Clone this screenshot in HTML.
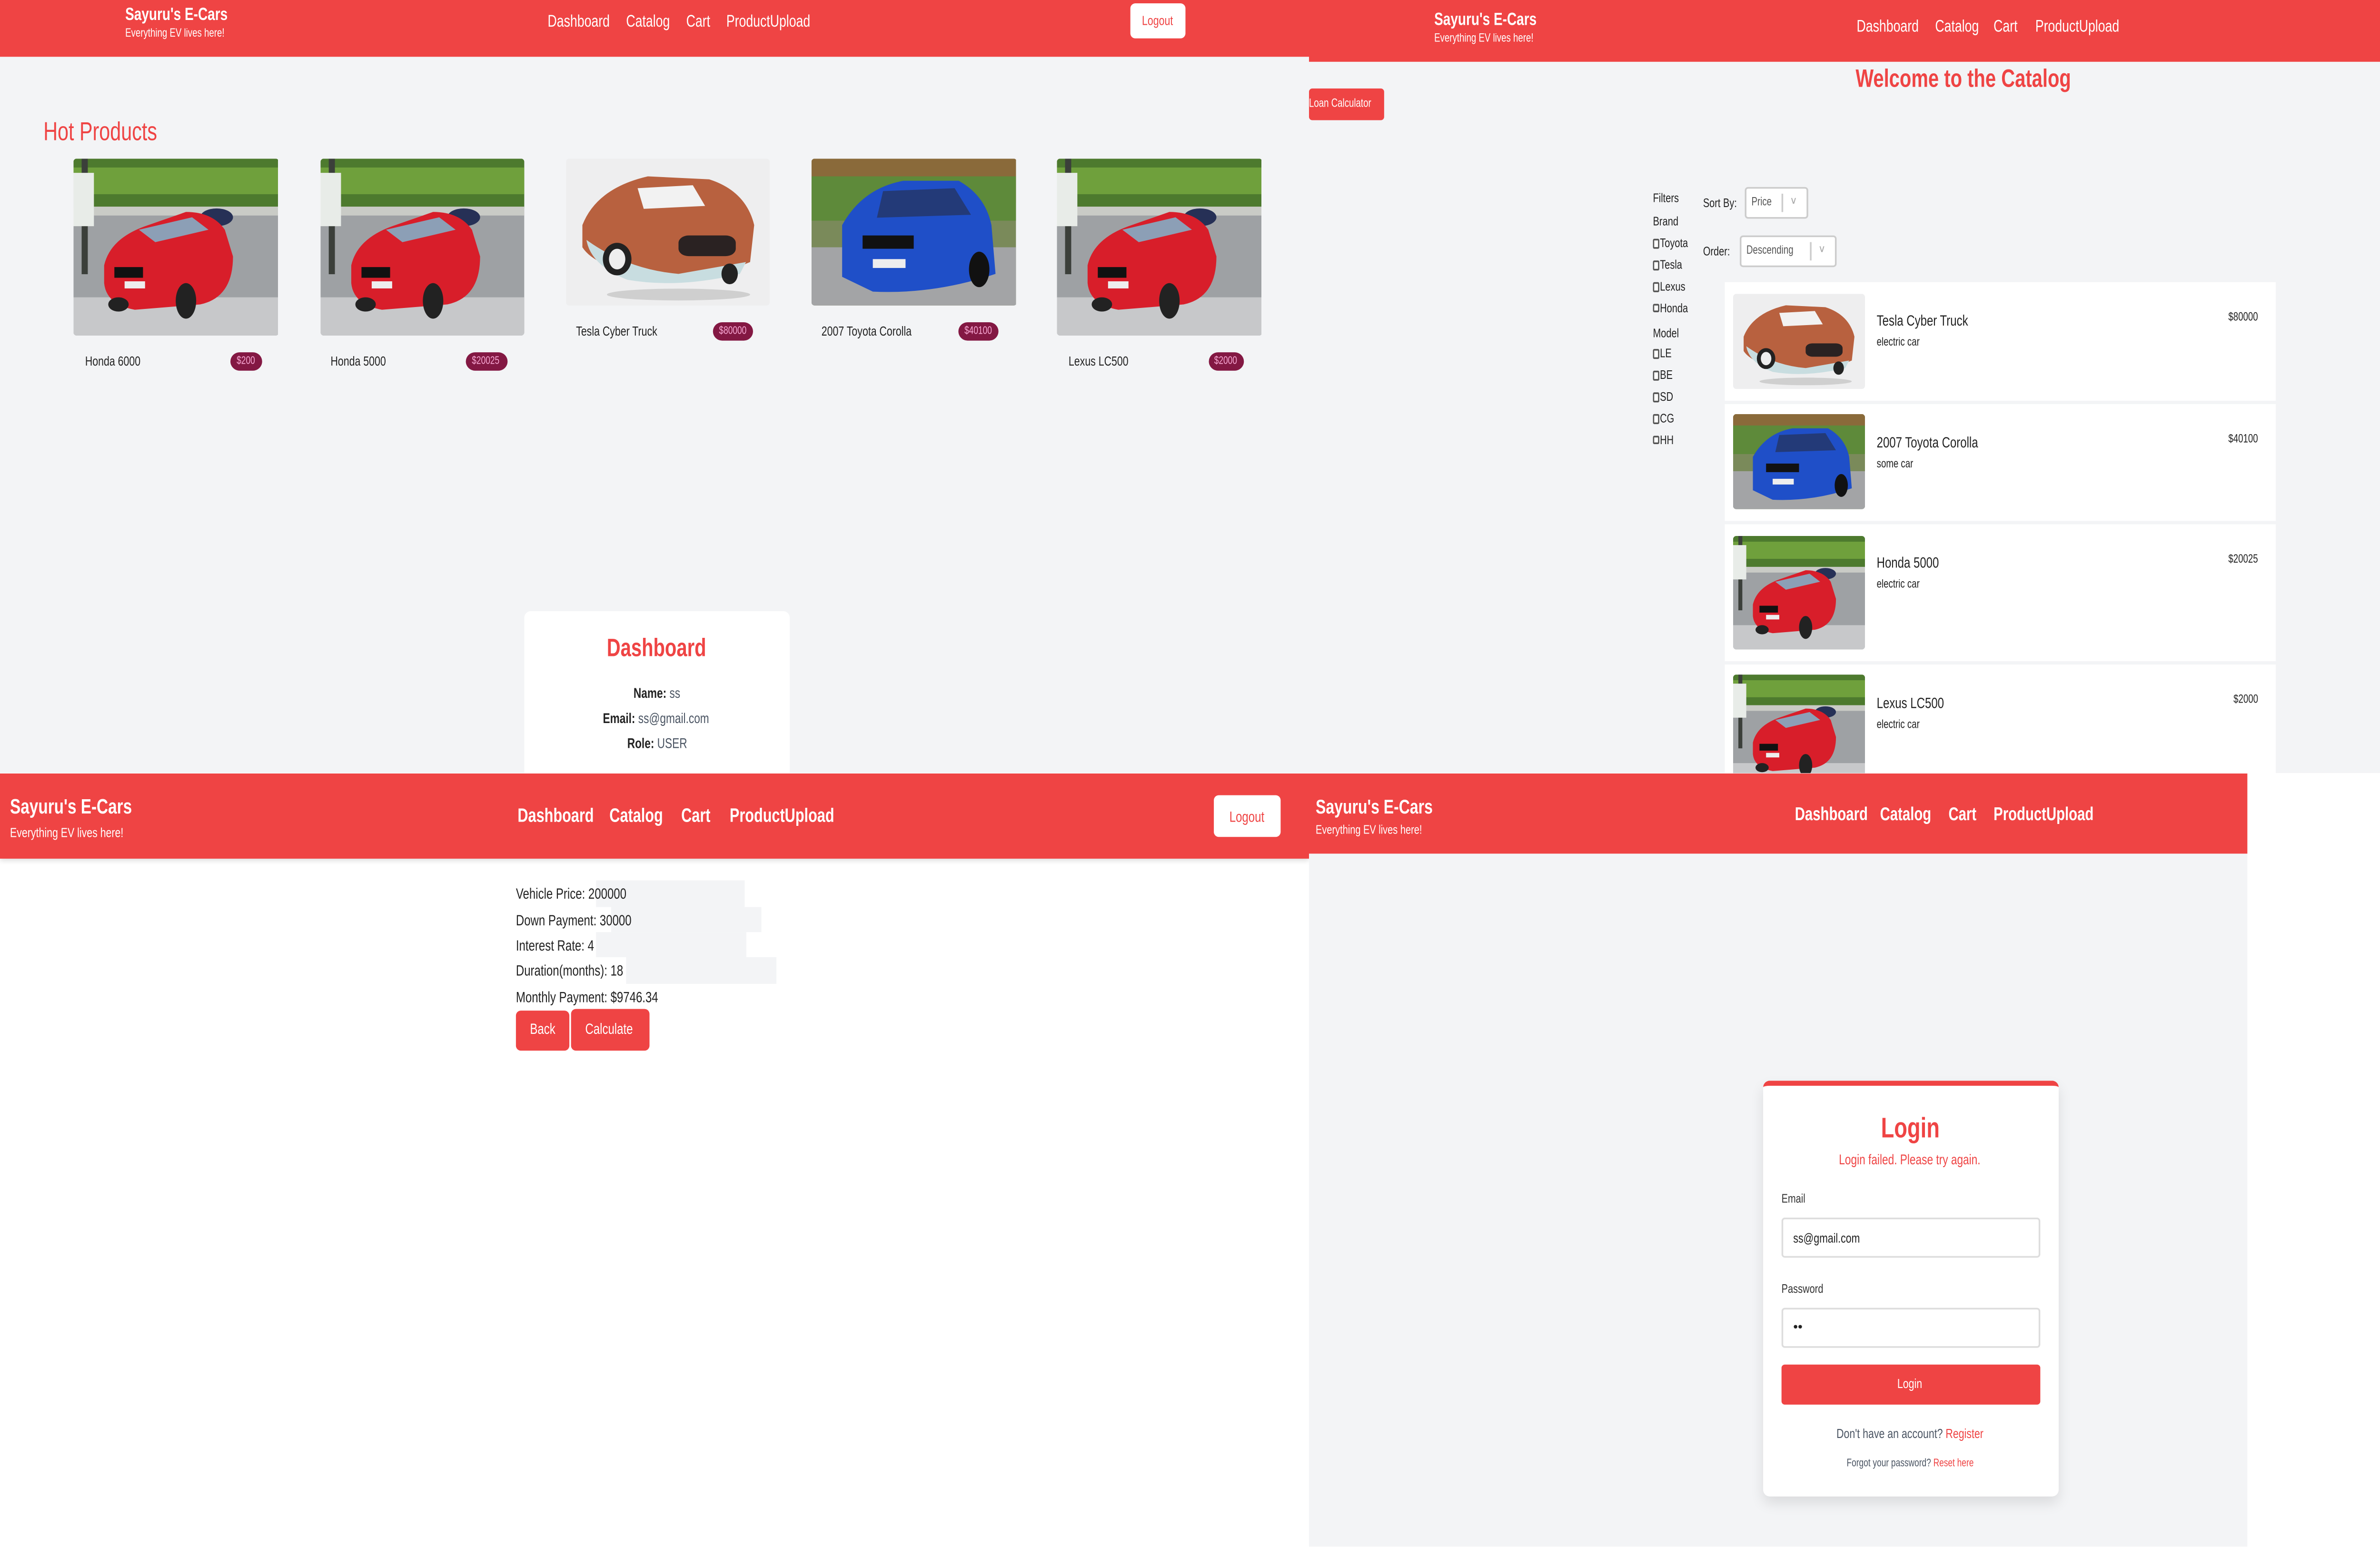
<!DOCTYPE html>
<html><head><meta charset="utf-8">
<style>
*{margin:0;padding:0;box-sizing:border-box}
html,body{width:5500px;height:3250px;overflow:hidden;background:#fff;font-family:"Liberation Sans",sans-serif}
.q{position:absolute;width:784px;height:463.3px;transform:scale(3.5077);transform-origin:0 0;overflow:hidden;background:#f3f4f6}
.a{position:absolute;white-space:nowrap}
.n{display:inline-block;transform:scaleX(.76);transform-origin:0 50%}
.c .n{transform-origin:50% 50%}
.r .n{transform-origin:100% 50%}
.nav{position:absolute;left:0;top:0;width:100%;background:#ef4444}
.w{color:#fff}
.red{color:#ef4444}
.btnw{position:absolute;background:#fff;border-radius:3px;color:#ef4444;font-size:8px;display:flex;align-items:center;justify-content:center}
.img{position:absolute;border-radius:2px;overflow:hidden}
.img svg{width:100%;height:100%;display:block}
.badge{position:absolute;background:#831843;color:#f9a8d4;border-radius:6px;font-size:6.5px;display:flex;align-items:center;justify-content:center}
.t8{font-size:8px;line-height:8px;color:#222}
.cb{display:inline-block;width:5px;height:5.5px;border:0.6px solid #555;border-radius:1px;margin-right:0.5px;vertical-align:-0.5px;background:#fff}
</style></head><body>
<svg width="0" height="0" style="position:absolute">
<defs>
<symbol id="redcar" viewBox="0 0 100 100" preserveAspectRatio="none">
<rect width="100" height="100" fill="#9ea1a4"/>
<rect width="100" height="28" fill="#4d7a2e"/>
<rect x="0" y="5" width="100" height="15" fill="#6fa03c"/>
<rect x="0" y="27" width="100" height="5" fill="#c9cbc6"/>
<rect x="0" y="78" width="100" height="22" fill="#c7c8ca"/>
<rect x="4" y="0" width="3" height="65" fill="#3b3f3a"/>
<rect x="0" y="8" width="10" height="30" fill="#e8ece8"/>
<ellipse cx="70" cy="33" rx="8" ry="5" fill="#263056"/>
<path d="M15 60 Q18 45 35 38 L55 30 Q68 30 74 40 L78 55 Q78 78 62 82 L30 85 Q16 82 15 70Z" fill="#d81e2a"/>
<path d="M32 40 L58 33 L66 40 L40 47Z" fill="#8c9fb6"/>
<rect x="20" y="61" width="14" height="6" fill="#111"/>
<rect x="25" y="69" width="10" height="4" fill="#eee"/>
<ellipse cx="55" cy="80" rx="5" ry="10" fill="#222"/>
<ellipse cx="22" cy="82" rx="5" ry="4" fill="#222"/>
</symbol>
<symbol id="oldcar" viewBox="0 0 100 100" preserveAspectRatio="none">
<rect width="100" height="100" fill="#eeeeef"/>
<path d="M8 45 Q15 20 40 12 L70 14 Q88 22 92 45 L90 70 Q70 82 45 80 Q15 75 8 60Z" fill="#b8613f"/>
<path d="M10 55 Q30 75 55 78 L88 70 L85 78 Q55 88 30 82 Q12 72 10 55Z" fill="#c8dde0"/>
<path d="M35 20 L62 18 L68 32 L38 34Z" fill="#f2f2f2"/>
<rect x="55" y="52" width="28" height="14" rx="5" fill="#2a2222"/>
<ellipse cx="25" cy="68" rx="7" ry="11" fill="#222"/>
<ellipse cx="25" cy="68" rx="4" ry="7" fill="#eee"/>
<ellipse cx="80" cy="78" rx="4" ry="7" fill="#222"/>
<ellipse cx="55" cy="92" rx="35" ry="4" fill="#cfcfcf"/>
</symbol>
<symbol id="bluecar" viewBox="0 0 100 100" preserveAspectRatio="none">
<rect width="100" height="100" fill="#7a8a5a"/>
<rect width="100" height="30" fill="#8a6a3a"/>
<rect x="0" y="12" width="100" height="30" fill="#5e8a3a"/>
<rect x="0" y="60" width="100" height="40" fill="#a3a4a6"/>
<path d="M15 45 Q25 20 45 15 L72 15 Q85 25 88 45 L90 78 Q60 92 30 90 L15 80Z" fill="#1f4fc8"/>
<path d="M35 22 L70 20 L78 38 L32 40Z" fill="#233a78"/>
<rect x="25" y="52" width="25" height="9" fill="#111"/>
<rect x="30" y="68" width="16" height="6" fill="#eee"/>
<ellipse cx="82" cy="75" rx="5" ry="12" fill="#111"/>
</symbol>
</defs>
</svg>

<!-- Q1 Home / Hot products -->
<div class="q" style="left:0;top:0">
 <div class="nav" style="height:34px"></div>
 <div class="a w" style="left:75px;top:3px;font-size:10.5px;font-weight:bold"><span class="n">Sayuru's E-Cars</span></div>
 <div class="a w" style="left:75px;top:17px;font-size:7px"><span class="n">Everything EV lives here!</span></div>
 <div class="a w" style="left:328px;top:8px;font-size:10px"><span class="n">Dashboard</span></div>
 <div class="a w" style="left:375px;top:8px;font-size:10px"><span class="n">Catalog</span></div>
 <div class="a w" style="left:410.5px;top:8px;font-size:10px"><span class="n">Cart</span></div>
 <div class="a w" style="left:435px;top:8px;font-size:10px"><span class="n">ProductUpload</span></div>
 <div class="btnw" style="left:676.5px;top:2.4px;width:33.5px;height:20.6px"><span class="n" style="transform-origin:50% 50%">Logout</span></div>
 <div class="a red" style="left:26px;top:71px;font-size:15.5px"><span class="n">Hot Products</span></div>

 <div class="img" style="left:44px;top:94.5px;width:122.5px;height:106.5px"><svg><use href="#redcar"/></svg></div>
 <div class="img" style="left:191.5px;top:94.5px;width:122.5px;height:106.5px"><svg><use href="#redcar"/></svg></div>
 <div class="img" style="left:338.5px;top:94.5px;width:122.5px;height:88.5px"><svg><use href="#oldcar"/></svg></div>
 <div class="img" style="left:486px;top:94.5px;width:122.5px;height:88.5px"><svg><use href="#bluecar"/></svg></div>
 <div class="img" style="left:633px;top:94.5px;width:122.5px;height:106.5px"><svg><use href="#redcar"/></svg></div>

 <div class="a t8" style="left:50.5px;top:212.5px"><span class="n">Honda 6000</span></div>
 <div class="badge" style="left:137.5px;top:210.5px;width:19px;height:11px"><span class="n" style="transform-origin:50% 50%">$200</span></div>
 <div class="a t8" style="left:197.5px;top:212.5px"><span class="n">Honda 5000</span></div>
 <div class="badge" style="left:279px;top:210.5px;width:24.5px;height:11px"><span class="n" style="transform-origin:50% 50%">$20025</span></div>
 <div class="a t8" style="left:345px;top:195px"><span class="n">Tesla Cyber Truck</span></div>
 <div class="badge" style="left:426.5px;top:193px;width:24px;height:11px"><span class="n" style="transform-origin:50% 50%">$80000</span></div>
 <div class="a t8" style="left:492px;top:195px"><span class="n">2007 Toyota Corolla</span></div>
 <div class="badge" style="left:574px;top:193px;width:24px;height:11px"><span class="n" style="transform-origin:50% 50%">$40100</span></div>
 <div class="a t8" style="left:639.5px;top:212.5px"><span class="n">Lexus LC500</span></div>
 <div class="badge" style="left:723.5px;top:210.5px;width:21.5px;height:11px"><span class="n" style="transform-origin:50% 50%">$2000</span></div>

 <div class="a" style="left:314px;top:366px;width:158.5px;height:100px;background:#fff;border-radius:4px"></div>
 <div class="a c red" style="left:314px;top:380px;width:158.5px;text-align:center;font-size:15px;font-weight:bold"><span class="n">Dashboard</span></div>
 <div class="a c" style="left:314px;top:409.5px;width:158.5px;text-align:center;font-size:8.5px;color:#4b5563"><span class="n"><b style="color:#222">Name:</b> ss</span></div>
 <div class="a c" style="left:314px;top:424.5px;width:158.5px;text-align:center;font-size:8.5px;color:#4b5563"><span class="n"><b style="color:#222">Email:</b> ss@gmail.com</span></div>
 <div class="a c" style="left:314px;top:439.5px;width:158.5px;text-align:center;font-size:8.5px;color:#4b5563"><span class="n"><b style="color:#222">Role:</b> USER</span></div>
</div>

<!-- Q2 Catalog -->
<div class="q" style="left:2750px;top:0">
 <div class="nav" style="height:36.6px"></div>
 <div class="a w" style="left:75px;top:5.5px;font-size:10.5px;font-weight:bold"><span class="n">Sayuru's E-Cars</span></div>
 <div class="a w" style="left:75px;top:19.5px;font-size:7px"><span class="n">Everything EV lives here!</span></div>
 <div class="a w" style="left:328px;top:10.5px;font-size:10px"><span class="n">Dashboard</span></div>
 <div class="a w" style="left:374.5px;top:10.5px;font-size:10px"><span class="n">Catalog</span></div>
 <div class="a w" style="left:410px;top:10.5px;font-size:10px"><span class="n">Cart</span></div>
 <div class="a w" style="left:434.5px;top:10.5px;font-size:10px"><span class="n">ProductUpload</span></div>
 <div class="btnw" style="left:676px;top:4.7px;width:33.5px;height:21.3px"><span class="n" style="transform-origin:50% 50%">Logout</span></div>
 <div class="a c red" style="left:292px;top:39px;width:200px;text-align:center;font-size:15px;font-weight:bold"><span class="n">Welcome to the Catalog</span></div>
 <div class="a" style="left:0;top:52.6px;width:45px;height:19.4px;background:#ef4444;border-radius:2px;color:#fff;font-size:7px;line-height:19.4px;overflow:hidden"><span class="n">Loan Calculator</span></div>

 <div class="a t8" style="left:205.5px;top:114.5px;font-size:7.5px"><span class="n">Filters</span></div>
 <div class="a t8" style="left:205.5px;top:129px;font-size:7.5px"><span class="n">Brand</span></div>
 <div class="a t8" style="left:205.5px;top:142px;font-size:7.5px"><span class="n"><i class="cb"></i>Toyota</span></div>
 <div class="a t8" style="left:205.5px;top:155px;font-size:7.5px"><span class="n"><i class="cb"></i>Tesla</span></div>
 <div class="a t8" style="left:205.5px;top:168px;font-size:7.5px"><span class="n"><i class="cb"></i>Lexus</span></div>
 <div class="a t8" style="left:205.5px;top:180.5px;font-size:7.5px"><span class="n"><i class="cb"></i>Honda</span></div>
 <div class="a t8" style="left:205.5px;top:196px;font-size:7.5px"><span class="n">Model</span></div>
 <div class="a t8" style="left:205.5px;top:208px;font-size:7.5px"><span class="n"><i class="cb"></i>LE</span></div>
 <div class="a t8" style="left:205.5px;top:221px;font-size:7.5px"><span class="n"><i class="cb"></i>BE</span></div>
 <div class="a t8" style="left:205.5px;top:234px;font-size:7.5px"><span class="n"><i class="cb"></i>SD</span></div>
 <div class="a t8" style="left:205.5px;top:247px;font-size:7.5px"><span class="n"><i class="cb"></i>CG</span></div>
 <div class="a t8" style="left:205.5px;top:259.5px;font-size:7.5px"><span class="n"><i class="cb"></i>HH</span></div>

 <div class="a t8" style="left:235.5px;top:118px;font-size:7.5px"><span class="n">Sort By:</span></div>
 <div class="a" style="left:261px;top:111.7px;width:38px;height:19.8px;background:#fff;border:0.6px solid #ccc;border-radius:2px"></div>
 <div class="a" style="left:265px;top:118px;font-size:7px;color:#555"><span class="n">Price</span></div>
 <div class="a" style="left:283px;top:116px;width:0.6px;height:11px;background:#ccc"></div>
 <div class="a" style="left:288px;top:117px;font-size:6px;color:#aaa">∨</div>
 <div class="a t8" style="left:235.5px;top:147px;font-size:7.5px"><span class="n">Order:</span></div>
 <div class="a" style="left:257.5px;top:141px;width:58px;height:19.4px;background:#fff;border:0.6px solid #ccc;border-radius:2px"></div>
 <div class="a" style="left:262px;top:147px;font-size:7px;color:#555"><span class="n">Descending</span></div>
 <div class="a" style="left:300px;top:145px;width:0.6px;height:11px;background:#ccc"></div>
 <div class="a" style="left:305px;top:146px;font-size:6px;color:#aaa">∨</div>

 <div class="a" style="left:249px;top:169px;width:330px;height:71px;background:#fff"></div>
 <div class="img" style="left:254px;top:176px;width:79px;height:57px"><svg><use href="#oldcar"/></svg></div>
 <div class="a t8" style="left:340px;top:187.5px;font-size:9px"><span class="n">Tesla Cyber Truck</span></div>
 <div class="a t8" style="left:340px;top:202px;font-size:7px"><span class="n">electric car</span></div>
 <div class="a t8 r" style="left:468px;width:100px;text-align:right;top:187px;font-size:7px"><span class="n">$80000</span></div>

 <div class="a" style="left:249px;top:242px;width:330px;height:70px;background:#fff"></div>
 <div class="img" style="left:254px;top:248px;width:79px;height:57px"><svg><use href="#bluecar"/></svg></div>
 <div class="a t8" style="left:340px;top:260.5px;font-size:9px"><span class="n">2007 Toyota Corolla</span></div>
 <div class="a t8" style="left:340px;top:275px;font-size:7px"><span class="n">some car</span></div>
 <div class="a t8 r" style="left:468px;width:100px;text-align:right;top:260px;font-size:7px"><span class="n">$40100</span></div>

 <div class="a" style="left:249px;top:314px;width:330px;height:82px;background:#fff"></div>
 <div class="img" style="left:254px;top:320.5px;width:79px;height:68.5px"><svg><use href="#redcar"/></svg></div>
 <div class="a t8" style="left:340px;top:332.5px;font-size:9px"><span class="n">Honda 5000</span></div>
 <div class="a t8" style="left:340px;top:347px;font-size:7px"><span class="n">electric car</span></div>
 <div class="a t8 r" style="left:468px;width:100px;text-align:right;top:332px;font-size:7px"><span class="n">$20025</span></div>

 <div class="a" style="left:249px;top:398px;width:330px;height:70px;background:#fff"></div>
 <div class="img" style="left:254px;top:404px;width:79px;height:68px"><svg><use href="#redcar"/></svg></div>
 <div class="a t8" style="left:340px;top:416.5px;font-size:9px"><span class="n">Lexus LC500</span></div>
 <div class="a t8" style="left:340px;top:431px;font-size:7px"><span class="n">electric car</span></div>
 <div class="a t8 r" style="left:468px;width:100px;text-align:right;top:416px;font-size:7px"><span class="n">$2000</span></div>
</div>

<!-- Q3 Loan calculator -->
<div class="q" style="left:0;top:1625px;background:#fff">
 <div class="nav" style="height:51px;box-shadow:0 1px 3px rgba(0,0,0,.15)"></div>
 <div class="a w" style="left:6px;top:13px;font-size:12.5px;font-weight:bold"><span class="n">Sayuru's E-Cars</span></div>
 <div class="a w" style="left:6px;top:30.5px;font-size:8px"><span class="n">Everything EV lives here!</span></div>
 <div class="a w" style="left:309.5px;top:19.5px;font-size:11.5px;font-weight:bold"><span class="n">Dashboard</span></div>
 <div class="a w" style="left:365px;top:19.5px;font-size:11.5px;font-weight:bold"><span class="n">Catalog</span></div>
 <div class="a w" style="left:408px;top:19.5px;font-size:11.5px;font-weight:bold"><span class="n">Cart</span></div>
 <div class="a w" style="left:437px;top:19.5px;font-size:11.5px;font-weight:bold"><span class="n">ProductUpload</span></div>
 <div class="btnw" style="left:726.5px;top:12.7px;width:40.5px;height:25.7px;font-size:9px"><span class="n" style="transform-origin:50% 50%">Logout</span></div>

 <div class="a" style="left:356.5px;top:64px;width:89.5px;height:15.5px;background:#f3f4f6"></div>
 <div class="a" style="left:365.5px;top:79.5px;width:90px;height:15.5px;background:#f3f4f6"></div>
 <div class="a" style="left:356.5px;top:95px;width:90px;height:15px;background:#f3f4f6"></div>
 <div class="a" style="left:374.5px;top:110px;width:90px;height:15.5px;background:#f3f4f6"></div>
 <div class="a t8" style="left:309px;top:67.5px;font-size:9px"><span class="n">Vehicle Price: 200000</span></div>
 <div class="a t8" style="left:309px;top:83.5px;font-size:9px"><span class="n">Down Payment: 30000</span></div>
 <div class="a t8" style="left:309px;top:98.5px;font-size:9px"><span class="n">Interest Rate: 4</span></div>
 <div class="a t8" style="left:309px;top:114px;font-size:9px"><span class="n">Duration(months): 18</span></div>
 <div class="a t8" style="left:309px;top:129.5px;font-size:9px"><span class="n">Monthly Payment: $9746.34</span></div>
 <div class="a" style="left:309px;top:142px;width:32px;height:23.5px;background:#ef4444;border-radius:3px;color:#fff;font-size:9px;line-height:23.5px;text-align:center"><span class="n" style="transform-origin:50% 50%">Back</span></div>
 <div class="a" style="left:341.5px;top:141px;width:47px;height:25px;background:#ef4444;border-radius:3px;color:#fff;font-size:9px;line-height:25px;text-align:center"><span class="n" style="transform-origin:50% 50%">Calculate</span></div>
</div>

<!-- Q4 Login -->
<div class="q" style="left:2750px;top:1625px;background:#fff">
 <div class="a" style="left:0;top:0;width:561.5px;height:464px;background:#f3f4f6"></div>
 <div class="nav" style="height:48px;width:561.5px"></div>
 <div class="a w" style="left:4px;top:12.5px;font-size:12px;font-weight:bold"><span class="n">Sayuru's E-Cars</span></div>
 <div class="a w" style="left:4px;top:28.5px;font-size:7.5px"><span class="n">Everything EV lives here!</span></div>
 <div class="a w" style="left:290.5px;top:18.5px;font-size:11px;font-weight:bold"><span class="n">Dashboard</span></div>
 <div class="a w" style="left:342px;top:18.5px;font-size:11px;font-weight:bold"><span class="n">Catalog</span></div>
 <div class="a w" style="left:382.5px;top:18.5px;font-size:11px;font-weight:bold"><span class="n">Cart</span></div>
 <div class="a w" style="left:409.5px;top:18.5px;font-size:11px;font-weight:bold"><span class="n">ProductUpload</span></div>

 <div class="a" style="left:271.5px;top:184px;width:177.5px;height:249px;background:#fff;border-top:3px solid #ef4444;border-radius:4px;box-shadow:0 4px 8px rgba(0,0,0,.1)"></div>
 <div class="a c red" style="left:271.5px;top:203px;width:177.5px;text-align:center;font-size:17px;font-weight:bold"><span class="n">Login</span></div>
 <div class="a c red" style="left:271.5px;top:226px;width:177.5px;text-align:center;font-size:8.5px"><span class="n">Login failed. Please try again.</span></div>
 <div class="a" style="left:282.5px;top:250px;font-size:7.5px;color:#333"><span class="n">Email</span></div>
 <div class="a" style="left:282.5px;top:265.6px;width:155.5px;height:24.8px;background:#fff;border:0.6px solid #ddd;border-radius:2px"></div>
 <div class="a" style="left:290px;top:274px;font-size:8px;color:#222"><span class="n">ss@gmail.com</span></div>
 <div class="a" style="left:282.5px;top:304px;font-size:7.5px;color:#333"><span class="n">Password</span></div>
 <div class="a" style="left:282.5px;top:319.6px;width:155.5px;height:24.8px;background:#fff;border:0.6px solid #ddd;border-radius:2px"></div>
 <div class="a" style="left:290px;top:327px;font-size:8px;color:#222">••</div>
 <div class="a" style="left:282.5px;top:354px;width:155.5px;height:24px;background:#ef4444;border-radius:2px;color:#fff;font-size:8px;line-height:24px;text-align:center"><span class="n" style="transform-origin:50% 50%">Login</span></div>
 <div class="a c" style="left:271.5px;top:391px;width:177.5px;text-align:center;font-size:8px;color:#4b5563"><span class="n">Don't have an account? <span class="red">Register</span></span></div>
 <div class="a c" style="left:271.5px;top:409.5px;width:177.5px;text-align:center;font-size:6.5px;color:#4b5563"><span class="n">Forgot your password? <span class="red">Reset here</span></span></div>
</div>
</body></html>
